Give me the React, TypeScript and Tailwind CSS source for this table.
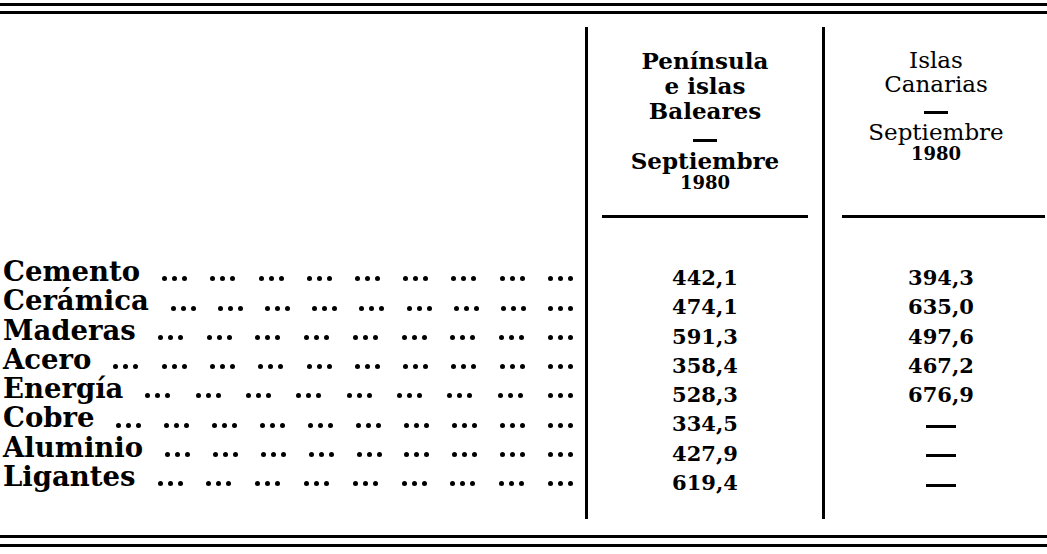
import React from "react";

type Row = { label: string; a: string; b: string | null; groups: number };

const rows: Row[] = [
  { label: "Cemento", a: "442,1", b: "394,3", groups: 9 },
  { label: "Cerámica", a: "474,1", b: "635,0", groups: 9 },
  { label: "Maderas", a: "591,3", b: "497,6", groups: 9 },
  { label: "Acero", a: "358,4", b: "467,2", groups: 10 },
  { label: "Energía", a: "528,3", b: "676,9", groups: 9 },
  { label: "Cobre", a: "334,5", b: null, groups: 10 },
  { label: "Aluminio", a: "427,9", b: null, groups: 9 },
  { label: "Ligantes", a: "619,4", b: null, groups: 9 },
];

function DotGroup() {
  return (
    <div className="flex gap-[5px] mb-[5px]">
      <span className="block w-[5px] h-[5px] rounded-full bg-black" />
      <span className="block w-[5px] h-[5px] rounded-full bg-black" />
      <span className="block w-[5px] h-[5px] rounded-full bg-black" />
    </div>
  );
}

export default function App() {
  return (
    <div className="w-[1047px] h-[554px] bg-white text-black font-['DejaVu_Serif',serif] overflow-hidden">
      <div className="pt-[3px]">
        <div className="h-[3px] bg-black" />
        <div className="h-[3px] bg-black mt-[5px]" />
      </div>

      <div className="mt-[13px] h-[492px] grid grid-cols-[585px_237px_225px]">
        {/* Label column */}
        <div className="flex flex-col">
          <div className="h-[230px]" />
          {rows.map((r) => (
            <div key={r.label} className="h-[29.3px] flex items-end pl-[3px] pr-[12px]">
              <span className="text-[27.5px] leading-[29.3px] font-bold whitespace-nowrap">
                {r.label}
              </span>
              <div className="flex-1 flex justify-between items-end pl-[22px]">
                {Array.from({ length: r.groups }).map((_, i) => (
                  <DotGroup key={i} />
                ))}
              </div>
            </div>
          ))}
        </div>

        {/* Península column */}
        <div className="border-l-[3px] border-black flex flex-col">
          <div className="h-[236px] flex flex-col">
            <div className="pt-[20.5px] text-center font-bold text-[23px] leading-[25px]">
              <div>Península</div>
              <div>e islas</div>
              <div>Baleares</div>
            </div>
            <div className="mt-[16px] mx-auto w-[24px] h-[3px] bg-black" />
            <div className="mt-[6px] text-center font-bold text-[23px] leading-[25px]">
              Septiembre
            </div>
            <div className="text-center font-bold text-[18px] leading-[20px]">1980</div>
            <div className="mt-[22.5px] ml-[14px] mr-[14px] h-[3px] bg-black" />
          </div>
          {rows.map((r) => (
            <div
              key={r.label}
              className="h-[29.3px] text-center font-bold text-[21px] leading-[29.3px]"
            >
              {r.a}
            </div>
          ))}
        </div>

        {/* Canarias column */}
        <div className="border-l-[3px] border-black flex flex-col">
          <div className="h-[236px] flex flex-col">
            <div className="pt-[21px] text-center text-[23px] leading-[24px]">
              <div>Islas</div>
              <div>Canarias</div>
            </div>
            <div className="mt-[15px] mx-auto w-[24px] h-[3px] bg-black" />
            <div className="mt-[6px] text-center text-[23px] leading-[24px]">Septiembre</div>
            <div className="text-center font-bold text-[18px] leading-[20px]">1980</div>
            <div className="mt-[51px] ml-[17px] mr-[2px] h-[3px] bg-black" />
          </div>
          {rows.map((r) => (
            <div
              key={r.label}
              className="h-[29.3px] pl-[10px] flex justify-center items-start font-bold text-[21px] leading-[29.3px]"
            >
              {r.b ? r.b : <div className="mt-[15.5px] w-[30px] h-[3px] bg-black" />}
            </div>
          ))}
        </div>
      </div>

      <div className="mt-[16px] h-[3px] bg-black" />
      <div className="mt-[6px] h-[3px] bg-black" />
    </div>
  );
}
